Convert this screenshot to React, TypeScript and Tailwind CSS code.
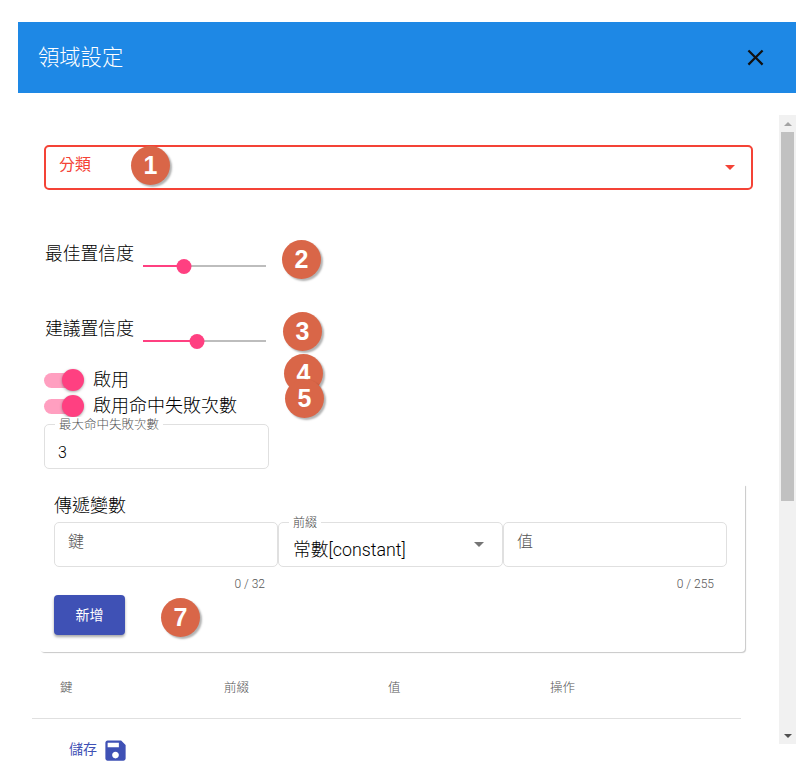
// @ts-nocheck
const font = { fontFamily: 'Roboto, "Noto Sans CJK TC", sans-serif' };

function Badge({ n, className }) {
  return (
    <div
      className={`absolute h-[39px] w-[39px] rounded-full bg-[#d96648] text-white font-bold text-[25px] leading-none flex items-center justify-center shadow-[2px_2px_2px_rgba(0,0,0,0.3)] ${className}`}
      style={{ fontFamily: '"Liberation Sans", sans-serif' }}
    >
      {n}
    </div>
  );
}

function Caret({ className }) {
  return <div className={`h-0 w-0 border-x-[5.5px] border-t-[5.5px] border-x-transparent ${className}`} />;
}

function SliderRow({ label, pct, className }) {
  return (
    <div className={`flex ml-[26px] ${className}`}>
      <div className="w-[99px] pl-px pt-px text-[17.8px] leading-6 text-black">{label}</div>
      <div className="relative mt-[17px] h-4 w-[123px] flex items-center">
        <div className="h-[2px] bg-[#ff4081]" style={{ width: `${pct}%` }} />
        <div className="h-[2px] flex-1 bg-[#bdbdbd]" />
        <div
          className="absolute h-[15px] w-[15px] -translate-x-1/2 rounded-full bg-[#ff4081]"
          style={{ left: `${pct}%` }}
        />
      </div>
    </div>
  );
}

function ToggleRow({ label }) {
  return (
    <div className="flex h-[26px] items-center ml-[26px]">
      <div className="relative h-[15px] w-[34px] rounded-full bg-[#ff9fc0]">
        <div className="absolute -right-[6px] -top-[4px] h-[22px] w-[22px] rounded-full bg-[#ff4081] shadow-[0_1px_3px_rgba(0,0,0,0.35)]" />
      </div>
      <span className="ml-[15px] -mt-px text-[18px] text-black">{label}</span>
    </div>
  );
}

function Field({ label, counter, className }) {
  return (
    <div className={className}>
      <div className="h-[45px] rounded-[5px] border border-[#e0e0e0] pl-[13px] pt-[7px] text-[16px] leading-6 text-[#555]">
        {label}
      </div>
      {counter && <div className="mt-[9px] pr-[13px] text-right text-[12px] leading-4 text-[#555]">{counter}</div>}
    </div>
  );
}

export default function App() {
  return (
    <div className="relative h-[775px] w-[812px] overflow-hidden bg-white font-light" style={font}>
      <div className="ml-[18px] w-[778px] pt-[22px]">
        <div className="flex h-[71px] items-center justify-between bg-[#1e88e5] pl-[20px] pr-[27px]">
          <h2 className="text-[21.3px] font-light text-white">領域設定</h2>
          <svg width="27" height="27" viewBox="0 0 24 24" fill="#111">
            <path d="M19 6.41L17.59 5 12 10.59 6.41 5 5 6.41 10.59 12 5 17.59 6.41 19 12 13.41 17.59 19 19 17.59 13.41 12z" />
          </svg>
        </div>

        <div className="flex">
          <div className="w-[761px]">
            <div className="ml-[26px] mt-[52px] flex h-[45px] w-[709px] items-center justify-between rounded-[5px] border-2 border-[#f44336] pl-[13px] pr-[16px] text-[16px] font-normal text-[#f44336]">
              <span className="-mt-[6px]">分類</span>
              <Caret className="border-t-[#f44336]" />
            </div>

            <SliderRow label="最佳置信度" pct={33} className="mt-[51px] h-[33px]" />
            <SliderRow label="建議置信度" pct={44} className="mt-[42px] h-[33px]" />

            <div className="mt-[18px]">
              <ToggleRow label="啟用" />
              <ToggleRow label="啟用命中失敗次數" />
            </div>

            <div className="relative ml-[26px] mt-[5px] h-[45px] w-[225px] rounded-[5px] border border-[#e0e0e0] pl-[13px] pt-[16px] text-[16px] leading-6 text-black">
              <span className="absolute -top-[8px] left-[10px] bg-white px-[4px] text-[12.5px] leading-4 text-[#555]">
                最大命中失敗次數
              </span>
              3
            </div>

            <div className="ml-[22px] mt-[16px] h-[167px] w-[705px] rounded-b-[4px] bg-white pl-[14px] pt-[9px] shadow-[1px_1px_1px_rgba(0,0,0,0.22)]">
              <div className="text-[18px] leading-6 text-black">傳遞變數</div>
              <div className="mt-[4px] flex">
                <Field label="鍵" counter="0 / 32" className="w-[224px]" />
                <div className="relative flex h-[45px] w-[225px] items-center justify-between rounded-[5px] border border-[#e0e0e0] pl-[14px] pr-[18px]">
                  <span className="absolute -top-[8px] left-[10px] bg-white px-[4px] text-[12px] leading-4 text-[#444]">前綴</span>
                  <span className="mt-[11px] text-[17.8px] text-black">常數[constant]</span>
                  <Caret className="border-t-[#757575]" />
                </div>
                <Field label="值" counter="0 / 255" className="w-[224px]" />
              </div>
              <button className="mt-[3px] block h-[40px] w-[71px] rounded-[4px] bg-[#3f51b5] text-[14px] font-normal text-white shadow-[0_2px_3px_rgba(0,0,0,0.35)]">
                新增
              </button>
            </div>

            <div className="ml-[14px] grid h-[67px] w-[709px] grid-cols-[164px_164px_162px_1fr] items-center border-b border-[#e0e0e0] pl-[28px] pt-[6px] text-[12.5px] text-[#555]">
              <span>鍵</span>
              <span>前綴</span>
              <span>值</span>
              <span>操作</span>
            </div>

            <div className="ml-[51px] mt-[18px] flex items-center text-[14px] font-normal text-[#3f51b5]">
              <span className="-mt-[2px]">儲存</span>
              <svg className="ml-[5px]" width="27" height="27" viewBox="0 0 24 24" fill="#3f51b5">
                <path d="M17 3H5c-1.11 0-2 .9-2 2v14c0 1.1.89 2 2 2h14c1.1 0 2-.9 2-2V7l-4-4zm-5 16c-1.66 0-3-1.34-3-3s1.34-3 3-3 3 1.34 3 3-1.34 3-3 3zm3-10H5V5h10v4z" />
              </svg>
            </div>
          </div>

          <div className="mt-[22px] flex h-[629px] w-[17px] flex-col items-center bg-[#f1f1f1]">
            <div className="flex h-[17px] items-center">
              <div className="h-0 w-0 border-x-[4px] border-b-[4px] border-x-transparent border-b-[#a3a3a3]" />
            </div>
            <div className="h-[369px] w-[13px] bg-[#c1c1c1]" />
            <div className="mt-auto flex h-[17px] items-center">
              <div className="h-0 w-0 border-x-[4px] border-t-[4px] border-x-transparent border-t-[#505050]" />
            </div>
          </div>
        </div>
      </div>

      <Badge n="1" className="left-[131px] top-[146px]" />
      <Badge n="2" className="left-[282px] top-[240px]" />
      <Badge n="3" className="left-[283px] top-[312px]" />
      <Badge n="4" className="left-[284px] top-[354px]" />
      <Badge n="5" className="left-[285px] top-[379px]" />
      <Badge n="7" className="left-[161px] top-[598px]" />
    </div>
  );
}
